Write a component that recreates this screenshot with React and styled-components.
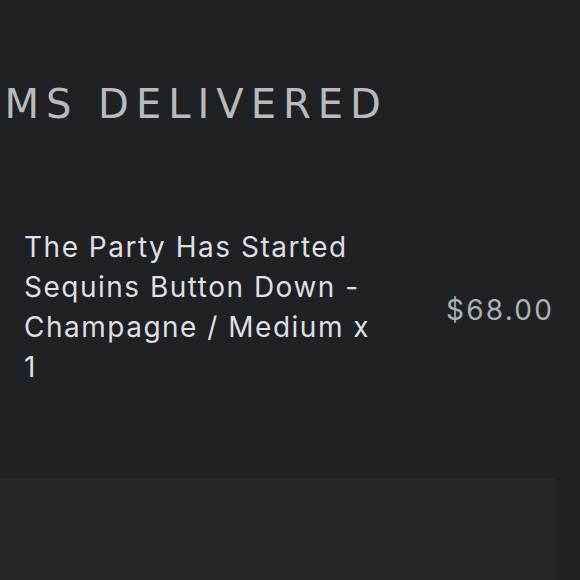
import styled, { createGlobalStyle } from "styled-components";

const GlobalStyle = createGlobalStyle`
  html, body {
    margin: 0;
    padding: 0;
    background-color: #202125;
  }
  body {
    overflow: hidden;
  }
`;

const App = () => {
  return (
    <Page>
      <GlobalStyle />
      <Title>ITEMS DELIVERED</Title>
      <ItemRow>
        <ItemName>The Party Has Started Sequins Button Down - Champagne / Medium x 1</ItemName>
        <Price>$68.00</Price>
      </ItemRow>
      <Summary />
    </Page>
  );
};

export default App;

const Summary = styled.div`
  background-color: #262729;
  height: 102px;
  margin-right: 25px;
`;
const Price = styled.div`
  font-family: Inter, "Noto Sans", sans-serif;
  font-size: 28px;
  letter-spacing: 2.2px;
  color: #afb0b2;
  white-space: nowrap;
  margin-right: -2px;
  padding-top: 6px;
`;
const ItemName = styled.div`
  font-family: Inter, "Noto Sans", sans-serif;
  font-size: 28px;
  line-height: 40px;
  letter-spacing: 1.5px;
  color: #dfdfe1;
  width: 352px;
`;
const ItemRow = styled.div`
  display: flex;
  align-items: center;
  justify-content: space-between;
  padding: 0 28px 0 24px;
  margin-bottom: 91px;
`;
const Title = styled.h2`
  font-family: "DejaVu Sans", Verdana, sans-serif;
  font-size: 40px;
  font-weight: 400;
  line-height: 48px;
  letter-spacing: 7px;
  color: #b9babc;
  white-space: nowrap;
  margin: 0 0 99px -78px;
`;
const Page = styled.div`
  background-color: #202125;
  height: 100vh;
  padding-top: 80px;
  box-sizing: border-box;
  overflow: hidden;
`;
